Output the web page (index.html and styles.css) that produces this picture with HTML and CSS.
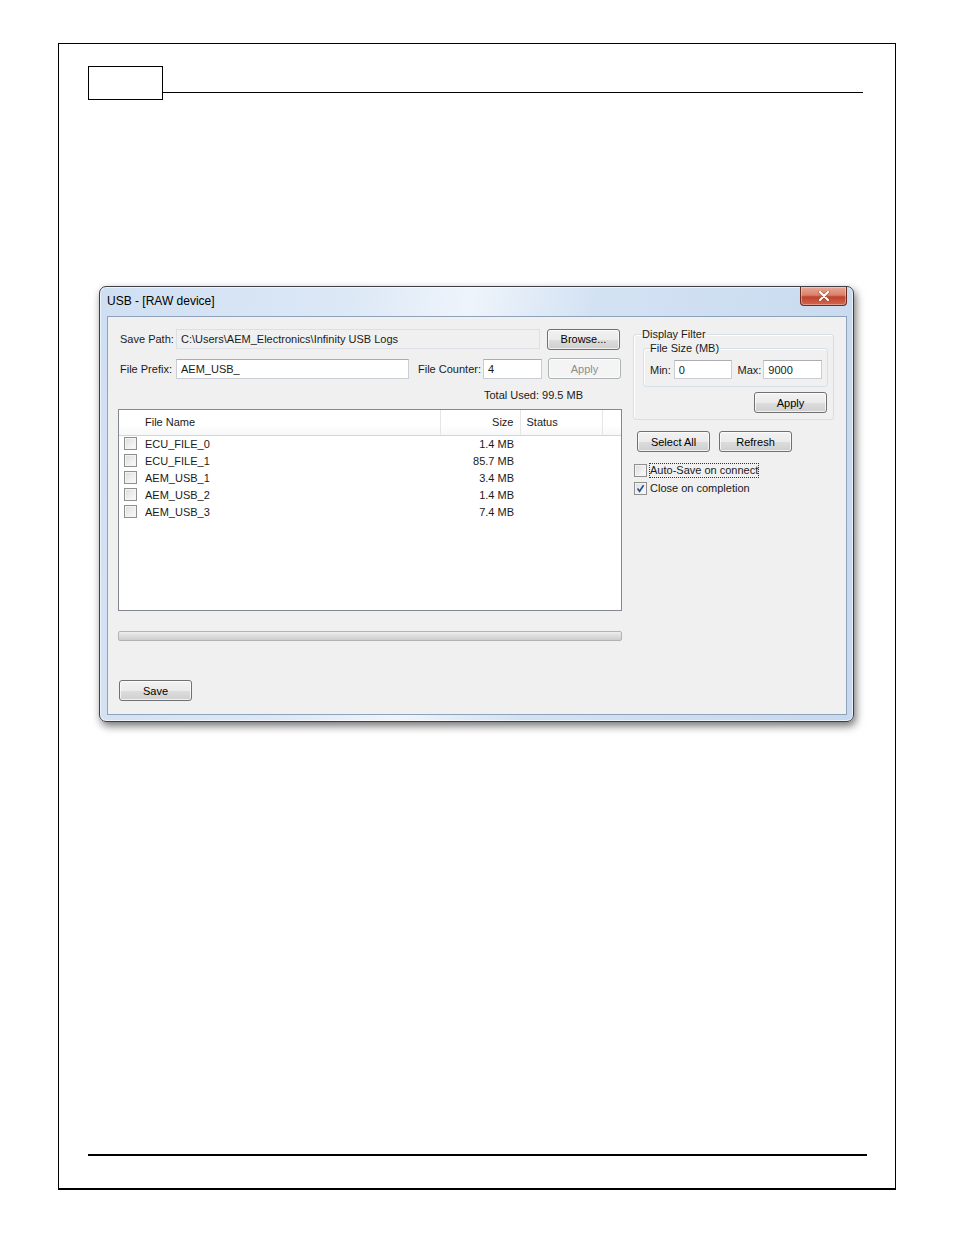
FILE: index.html
```html
<!DOCTYPE html>
<html lang="en">
  <head>
    <meta charset="UTF-8" />
    <meta name="viewport" content="width=device-width, initial-scale=1.0" />
    <title>USB - [RAW device]</title>
    <link rel="stylesheet" href="styles.css">
  </head>
  <body>
    <div class="page">
      <div class="page-head">
        <div class="head-box"></div>
        <div class="head-line"></div>
      </div>

      <div class="window">
        <div class="titlebar">
          <span class="title">USB - [RAW device]</span>
          <div class="close">
            <svg width="14" height="10" viewBox="0 0 14 10">
              <path d="M3 1 L11 9 M11 1 L3 9" stroke="#6b2a1e" stroke-width="3.4" stroke-linecap="round" opacity="0.5"/>
              <path d="M3 1 L11 9 M11 1 L3 9" stroke="#fff" stroke-width="2.2" stroke-linecap="round"/>
            </svg>
          </div>
        </div>

        <div class="client">
          <div class="col-left">
            <div class="row row-path">
              <span class="lbl">Save Path:</span>
              <div class="field readonly path-field">C:\Users\AEM_Electronics\Infinity USB Logs</div>
              <div class="btn">Browse...</div>
            </div>
            <div class="row row-prefix">
              <span class="lbl">File Prefix:</span>
              <div class="field prefix-field">AEM_USB_</div>
              <span class="lbl counter-lbl">File Counter:</span>
              <div class="field counter-field">4</div>
              <div class="btn disabled">Apply</div>
            </div>
            <div class="total">Total Used: 99.5 MB</div>

            <div class="list">
              <table class="files">
                <colgroup>
                  <col class="c-check">
                  <col class="c-name">
                  <col class="c-size">
                  <col class="c-status">
                  <col>
                </colgroup>
                <thead>
                  <tr>
                    <th></th>
                    <th class="h-name">File Name</th>
                    <th class="h-size">Size</th>
                    <th class="h-status">Status</th>
                    <th class="h-fill"></th>
                  </tr>
                </thead>
                <tbody>
                  <tr><td><span class="cb"></span></td><td>ECU_FILE_0</td><td class="size">1.4 MB</td><td></td><td></td></tr>
                  <tr><td><span class="cb"></span></td><td>ECU_FILE_1</td><td class="size">85.7 MB</td><td></td><td></td></tr>
                  <tr><td><span class="cb"></span></td><td>AEM_USB_1</td><td class="size">3.4 MB</td><td></td><td></td></tr>
                  <tr><td><span class="cb"></span></td><td>AEM_USB_2</td><td class="size">1.4 MB</td><td></td><td></td></tr>
                  <tr><td><span class="cb"></span></td><td>AEM_USB_3</td><td class="size">7.4 MB</td><td></td><td></td></tr>
                </tbody>
              </table>
            </div>

            <div class="progress"></div>

            <div class="btn save">Save</div>
          </div>

          <div class="col-right">
            <fieldset class="group">
              <legend>Display Filter</legend>
              <fieldset class="group inner">
                <legend>File Size (MB)</legend>
                <div class="minmax">
                  <span class="lbl">Min:</span>
                  <div class="field small">0</div>
                  <span class="lbl max-lbl">Max:</span>
                  <div class="field small">9000</div>
                </div>
              </fieldset>
              <div class="btn filter-apply">Apply</div>
            </fieldset>

            <div class="btn-row">
              <div class="btn">Select All</div>
              <div class="btn">Refresh</div>
            </div>

            <div class="check-row">
              <span class="cb"></span>
              <span class="focus">Auto-Save on connect</span>
            </div>
            <div class="check-row">
              <span class="cb checked">
                <svg width="11" height="11" viewBox="0 0 11 11">
                  <path d="M2.5 5.5 L4.6 8.3 L8.6 2.3" fill="none" stroke="#2a4e8c" stroke-width="1.6"/>
                </svg>
              </span>
              <span>Close on completion</span>
            </div>
          </div>
        </div>
      </div>

      <div class="page-foot"></div>
    </div>
  </body>
</html>
```

FILE: styles.css
```css
* {
  box-sizing: border-box;
}
body {
  margin: 0;
  background: #fff;
  font-family: "Liberation Sans", Arial, sans-serif;
  font-size: 11px;
  color: #1a1a1a;
}
.page {
  display: flex;
  flex-direction: column;
  margin: 43px 0 0 58px;
  width: 838px;
  height: 1147px;
  border: 1px solid #000;
  border-bottom-width: 2px;
}
.page-head {
  display: flex;
  align-items: flex-start;
  margin: 22px 32px 0 29px;
}
.head-box {
  width: 75px;
  height: 34px;
  border: 1px solid #000;
}
.head-line {
  flex: 1;
  height: 27px;
  border-bottom: 1px solid #000;
}
.page-foot {
  margin: auto 28px 32px 29px;
  border-top: 2px solid #000;
}

/* window */
.window {
  margin: 186px 0 0 40px;
  width: 755px;
  height: 436px;
  border: 1px solid #3c3f44;
  border-radius: 7px;
  padding: 0 6px 6px 7px;
  background: linear-gradient(100deg, #cfdff2 0%, #dce8f6 30%, #eef4fb 45%, #d3e2f3 60%, #c7d9ef 100%);
  box-shadow: 2px 4px 8px rgba(0, 0, 0, 0.55), inset 0 0 0 1px rgba(255, 255, 255, 0.6);
  display: flex;
  flex-direction: column;
}
.titlebar {
  height: 29px;
  display: flex;
  justify-content: space-between;
  align-items: flex-start;
}
.title {
  margin-top: 7px;
  font-size: 12px;
  color: #000;
}
.close {
  width: 47px;
  height: 19px;
  border: 1px solid #6a2a20;
  border-top: none;
  border-radius: 0 0 4px 4px;
  background: linear-gradient(#e9a796 0%, #d9826d 45%, #c0432c 55%, #d2664c 100%);
  display: flex;
  align-items: center;
  justify-content: center;
  box-shadow: inset 0 0 0 1px rgba(255, 255, 255, 0.35);
}
.client {
  flex: 1;
  background: #f0f0f0;
  border: 1px solid #8ea2ba;
  display: flex;
  gap: 11px;
  padding: 12px 0 0 10px;
}

/* controls */
.row {
  display: flex;
  align-items: center;
}
.lbl {
  white-space: nowrap;
}
.row-path {
  height: 20px;
}
.row-path .lbl,
.row-prefix .lbl {
  width: 58px;
  padding-left: 2px;
}
.row-prefix {
  margin-top: 9px;
  height: 21px;
}
.row-prefix .counter-lbl {
  width: auto;
  margin-left: 9px;
  padding-left: 0;
  margin-right: 2px;
}
.field {
  height: 20px;
  background: #fff;
  border: 1px solid #c9ced6;
  border-top-color: #abadb3;
  padding: 0 4px;
  display: flex;
  align-items: center;
  white-space: nowrap;
}
.field.readonly {
  background: #f0f0f0;
  border-color: #dcdfe3;
}
.path-field {
  width: 364px;
  margin-right: 7px;
}
.prefix-field {
  width: 233px;
}
.counter-field {
  width: 59px;
  margin-right: 6px;
}
.btn {
  width: 73px;
  height: 21px;
  border: 1px solid #707070;
  border-radius: 3px;
  background: linear-gradient(#f2f2f2 0%, #ebebeb 50%, #dddddd 51%, #cfcfcf 100%);
  box-shadow: inset 0 0 0 1px rgba(255, 255, 255, 0.7);
  display: flex;
  align-items: center;
  justify-content: center;
  color: #000;
  white-space: nowrap;
}
.btn.disabled {
  border-color: #adb2b5;
  background: #f4f4f4;
  color: #8d8d8d;
}
.total {
  margin: 8px 0 0 366px;
  height: 16px;
  line-height: 16px;
}

/* list */
.col-left {
  width: 504px;
  display: flex;
  flex-direction: column;
}
.list {
  margin-top: 6px;
  height: 202px;
  background: #fff;
  border: 1px solid #828790;
}
.files {
  width: 100%;
  border-collapse: collapse;
  table-layout: fixed;
}
.c-check {
  width: 21px;
}
.c-name {
  width: 300px;
}
.c-size {
  width: 80px;
}
.c-status {
  width: 82px;
}
.files th {
  height: 25px;
  font-weight: normal;
  text-align: left;
  background: linear-gradient(#ffffff 0%, #ffffff 60%, #f6f7f8 100%);
  border-bottom: 1px solid #d5d5d5;
  padding: 0;
}
.files th.h-name {
  padding-left: 5px;
  border-right: 1px solid #e3e5e7;
}
.files th.h-size {
  text-align: right;
  padding-right: 6px;
  border-right: 1px solid #e3e5e7;
}
.files th.h-status {
  padding-left: 6px;
  border-right: 1px solid #e3e5e7;
}
.files td {
  height: 17px;
  padding: 0 0 0 5px;
  white-space: nowrap;
}
.files td.size {
  text-align: right;
  padding: 0 6px 0 0;
}
.cb {
  display: inline-flex;
  align-items: center;
  justify-content: center;
  width: 13px;
  height: 13px;
  border: 1px solid #8f8f8f;
  background: linear-gradient(135deg, #dcdcdc 0%, #f0f0f0 60%, #fbfbfb 100%);
  box-shadow: inset 0 0 0 1px #f4f4f4;
  vertical-align: middle;
}
.files .cb {
  margin-top: -1px;
}
.progress {
  margin-top: 20px;
  height: 10px;
  border: 1px solid #b3b3b3;
  border-radius: 2px;
  background: linear-gradient(#eeeeee 0%, #dcdcdc 50%, #cdcdcd 100%);
}
.save {
  margin: 39px 0 0 1px;
}

/* right side */
.col-right {
  width: 201px;
  display: flex;
  flex-direction: column;
  margin-top: -2px;
}
.group {
  margin: 0;
  min-width: 0;
  width: 201px;
  border: 1px solid #d5dfe5;
  border-radius: 3px;
  box-shadow: inset 1px 1px 0 #fff;
  padding: 0 5px 6px 9px;
  display: flex;
  flex-direction: column;
}
.group legend {
  padding: 0;
  margin-left: -1px;
  line-height: 14px;
}
.group.inner {
  width: 185px;
  margin-left: 0;
  padding: 5px 5px 7px 6px;
}
.group.inner legend {
  margin-left: 0;
}
.minmax {
  display: flex;
  align-items: center;
  height: 19px;
}
.minmax .lbl {
  margin-right: 3px;
}
.minmax .max-lbl {
  margin-left: 5px;
  margin-right: 2px;
}
.field.small {
  width: 59px;
  height: 19px;
}
.filter-apply {
  align-self: flex-end;
  margin: 5px 1px 0 0;
}
.btn-row {
  display: flex;
  gap: 9px;
  margin: 11px 0 0 4px;
}
.check-row {
  display: flex;
  align-items: center;
  gap: 3px;
  height: 18px;
  margin-left: 1px;
}
.btn-row + .check-row {
  margin-top: 9px;
}
.cb.checked {
  background: linear-gradient(135deg, #dcdcdc 0%, #f0f0f0 60%, #fbfbfb 100%);
}
.focus {
  outline: 1px dotted #333;
  outline-offset: 0;
  line-height: 13px;
}
```
